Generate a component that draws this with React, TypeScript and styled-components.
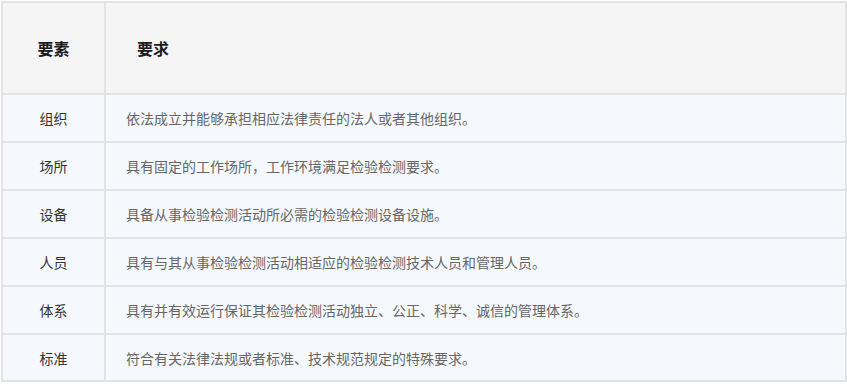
import React from "react";
import styled, { createGlobalStyle } from "styled-components";

const GlobalStyle = createGlobalStyle`
  body {
    margin: 0;
    background: #ffffff;
    font-family: "Noto Sans CJK SC", "Noto Sans", sans-serif;
  }
`;

const Page = styled.div`
  padding: 1px;
`;

const Table = styled.div`
  width: 846px;
  box-sizing: border-box;
  display: grid;
  grid-template-columns: 103px 741px;
  border-left: 2px solid #e3e3e5;
  border-top: 2px solid #e3e3e5;
`;

const Cell = styled.div<{ $head?: boolean; $key?: boolean; $h: number }>`
  box-sizing: border-box;
  height: ${(p) => p.$h}px;
  display: flex;
  align-items: center;
  justify-content: ${(p) => (p.$key ? "center" : "flex-start")};
  padding: ${(p) => (p.$key ? "0" : p.$head ? "0 0 0 31px" : "0 0 0 20px")};
  border-right: 2px solid #e3e3e5;
  border-bottom: 2px solid #e3e3e5;
  background: ${(p) => (p.$head ? "#f5f5f5" : "#f5f9fe")};
  color: ${(p) => (p.$head ? "#1c1c1c" : p.$key ? "#333333" : "#666666")};
  font-size: ${(p) => (p.$head ? 16 : 14)}px;
  font-weight: ${(p) => (p.$head ? 700 : 400)};
  white-space: nowrap;
`;

const rows = [
  ["组织", "依法成立并能够承担相应法律责任的法人或者其他组织。"],
  ["场所", "具有固定的工作场所，工作环境满足检验检测要求。"],
  ["设备", "具备从事检验检测活动所必需的检验检测设备设施。"],
  ["人员", "具有与其从事检验检测活动相适应的检验检测技术人员和管理人员。"],
  ["体系", "具有并有效运行保证其检验检测活动独立、公正、科学、诚信的管理体系。"],
  ["标准", "符合有关法律法规或者标准、技术规范规定的特殊要求。"],
];

function App() {
  return (
    <Page>
      <GlobalStyle />
      <Table>
        <Cell $head $key $h={92}>要素</Cell>
        <Cell $head $h={92}>要求</Cell>
        {rows.map(([k, v], i) => {
          const h = i === rows.length - 1 ? 47 : 48;
          return (
            <React.Fragment key={k}>
              <Cell $key $h={h}>{k}</Cell>
              <Cell $h={h}>{v}</Cell>
            </React.Fragment>
          );
        })}
      </Table>
    </Page>
  );
}

export default App;
